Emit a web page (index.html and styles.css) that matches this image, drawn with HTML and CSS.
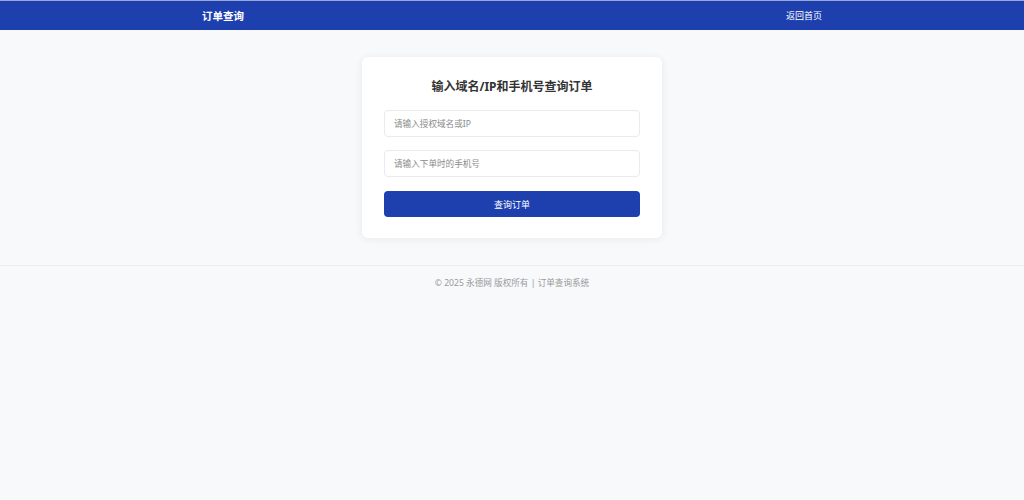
FILE: index.html
```html
<!DOCTYPE html>
<html lang="zh-CN">
<head>
<meta charset="utf-8">
<title>订单查询</title>
<link rel="stylesheet" href="styles.css">
</head>
<body>
<header class="topbar">
  <div class="topbar-inner">
    <div class="brand">订单查询</div>
    <a class="home-link" href="#">返回首页</a>
  </div>
</header>
<main class="main">
  <section class="card">
    <h1 class="card-title">输入域名/IP和手机号查询订单</h1>
    <form class="form">
      <input class="field" type="text" placeholder="请输入授权域名或IP">
      <input class="field" type="text" placeholder="请输入下单时的手机号">
      <button class="submit" type="button">查询订单</button>
    </form>
  </section>
</main>
<footer class="footer">© 2025 永德网 版权所有 | 订单查询系统</footer>
</body>
</html>
```
FILE: styles.css
```css
* { box-sizing: border-box; }
html, body { margin: 0; padding: 0; }
body {
  background: #f8f9fb;
  font-family: "Noto Sans", "Noto Sans CJK SC", sans-serif;
  color: #333;
}
.topbar {
  background: #1e40af;
  border-top: 1px solid #9aa6d6;
  height: 30px;
}
.topbar-inner {
  width: 620px;
  margin: 0 auto;
  height: 29px;
  display: flex;
  align-items: center;
  justify-content: space-between;
}
.brand {
  color: #fff;
  font-weight: 700;
  font-size: 10.5px;
}
.home-link {
  color: #fff;
  font-size: 9px;
  text-decoration: none;
}
.main {
  padding: 27px 0 27px;
  display: flex;
  justify-content: center;
}
.card {
  width: 300px;
  background: #fff;
  border-radius: 6px;
  padding: 22px 22px 21px;
  box-shadow: 0 1px 8px rgba(0, 0, 0, 0.07);
}
.card-title {
  margin: 0 0 15px;
  text-align: center;
  font-size: 12px;
  font-weight: 700;
  line-height: 16px;
  color: #333;
}
.form {
  display: flex;
  flex-direction: column;
  gap: 13px;
}
.field {
  height: 27px;
  border: 1px solid #e8eaee;
  border-radius: 4px;
  padding: 0 9px;
  font-family: inherit;
  font-size: 8.6px;
  color: #333;
  background: #fff;
  outline: none;
}
.field::placeholder { color: #8a8a8a; }
.submit {
  margin-top: 1px;
  height: 26px;
  border: none;
  border-radius: 4px;
  background: #1e40af;
  color: #fff;
  font-family: inherit;
  font-size: 9px;
  cursor: pointer;
}
.footer {
  border-top: 1px solid #eceef1;
  text-align: center;
  font-size: 8.6px;
  color: #999;
  padding: 11px 0;
  line-height: 13px;
}
```
